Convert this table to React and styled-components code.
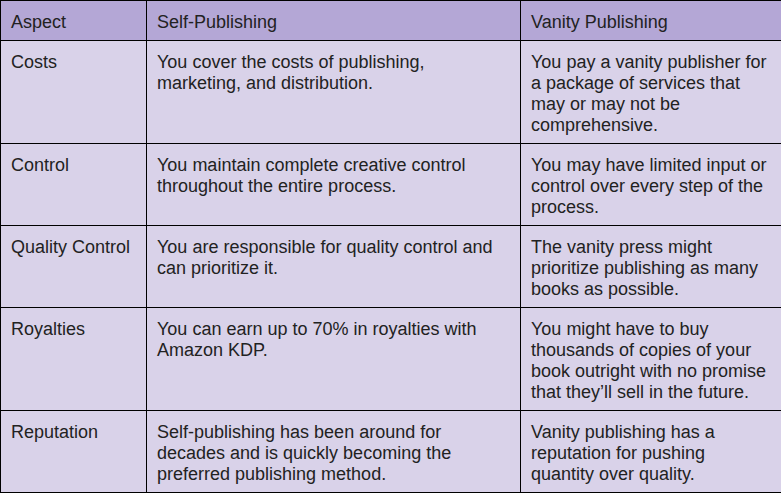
import React from 'react'
import styled, { createGlobalStyle } from 'styled-components'

const rows = [
    {
        aspect: 'Costs',
        self: 'You cover the costs of publishing, marketing, and distribution.',
        vanity: 'You pay a vanity publisher for a package of services that may or may not be comprehensive.',
    },
    {
        aspect: 'Control',
        self: 'You maintain complete creative control throughout the entire process.',
        vanity: 'You may have limited input or control over every step of the process.',
    },
    {
        aspect: 'Quality Control',
        self: 'You are responsible for quality control and can prioritize it.',
        vanity: 'The vanity press might prioritize publishing as many books as possible.',
    },
    {
        aspect: 'Royalties',
        self: 'You can earn up to 70% in royalties with Amazon KDP.',
        vanity: 'You might have to buy thousands of copies of your book outright with no promise that they\u2019ll sell in the future.',
    },
    {
        aspect: 'Reputation',
        self: 'Self-publishing has been around for decades and is quickly becoming the preferred publishing method.',
        vanity: 'Vanity publishing has a reputation for pushing quantity over quality.',
    },
]

const GlobalStyle = createGlobalStyle`
    html, body{
        overflow: hidden;
    }
    body{
        margin: 0;
        background: #ffffff;
        font-family: "Liberation Sans", Arial, sans-serif;
    }
`

const App = () => {
    return (
        <>
            <GlobalStyle />
            <CompareTable>
                <colgroup>
                    <Col $w={146} />
                    <Col $w={374} />
                    <Col $w={267} />
                </colgroup>
                <thead>
                    <tr>
                        <HeadCell>Aspect</HeadCell>
                        <HeadCell>Self-Publishing</HeadCell>
                        <HeadCell>Vanity Publishing</HeadCell>
                    </tr>
                </thead>
                <tbody>
                    {rows.map((row) => (
                        <tr key={row.aspect}>
                            <Cell>{row.aspect}</Cell>
                            <Cell>{row.self}</Cell>
                            <Cell>{row.vanity}</Cell>
                        </tr>
                    ))}
                </tbody>
            </CompareTable>
        </>
    )
}

export default App

// table runs a few px past the window on the right, like the source crop
const CompareTable = styled.table`
    width: 787px;
    table-layout: fixed;
    border-collapse: collapse;
    color: #222222;
    font-size: 18px;
    line-height: 21px;
`

const Col = styled.col`
    width: ${(p) => p.$w}px;
`

const HeadCell = styled.th`
    background-color: #b4a7d6;
    border: 1px solid #000000;
    padding: 10.5px 14px 7.5px 10px;
    text-align: left;
    vertical-align: top;
    font-weight: normal;
`

const Cell = styled.td`
    background-color: #d9d2e9;
    border: 1px solid #000000;
    padding: 10.5px 14px 7.5px 10px;
    text-align: left;
    vertical-align: top;
`
